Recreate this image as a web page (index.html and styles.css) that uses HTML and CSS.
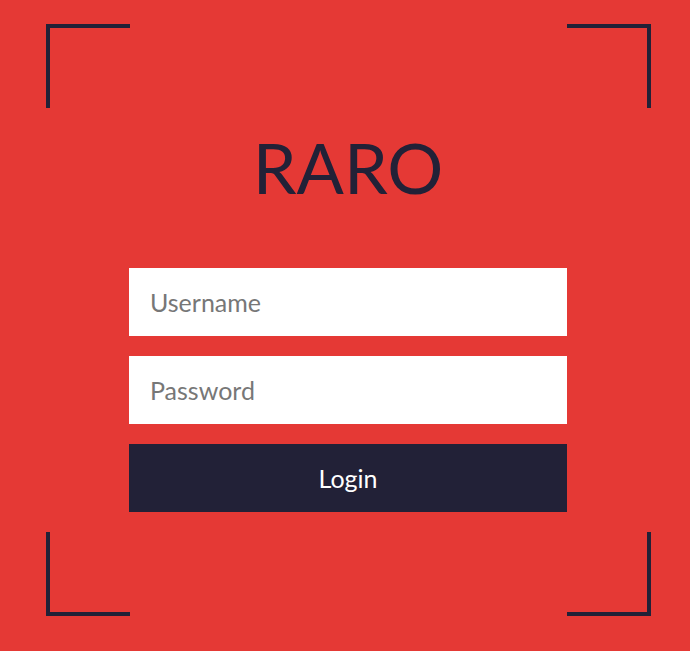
FILE: index.html
```html
<!DOCTYPE html>
<html>
<head>
<meta charset="utf-8">
<link rel="stylesheet" href="styles.css">
</head>
<body>
<div class="frame">
  <div class="corner-row">
    <span class="corner tl"></span>
    <span class="corner tr"></span>
  </div>
  <div class="content">
    <h1 class="title">RARO</h1>
    <form class="form">
      <input class="field" type="text" placeholder="Username">
      <input class="field" type="password" placeholder="Password">
      <button class="login" type="button">Login</button>
    </form>
  </div>
  <div class="corner-row">
    <span class="corner bl"></span>
    <span class="corner br"></span>
  </div>
</div>
</body>
</html>
```

FILE: styles.css
```css
html, body {
  margin: 0;
  padding: 0;
  background: #e53935;
  height: 100%;
}
body {
  font-family: "Lato", "Open Sans", sans-serif;
}
.frame {
  width: 605px;
  height: 592px;
  margin: 24px 0 0 46px;
  display: flex;
  flex-direction: column;
}
.corner-row {
  display: flex;
  justify-content: space-between;
  height: 84px;
}
.corner {
  width: 84px;
  height: 84px;
  box-sizing: border-box;
  border: 0 solid #222137;
}
.tl { border-top-width: 4px; border-left-width: 4px; }
.tr { border-top-width: 4px; border-right-width: 4px; }
.bl { border-bottom-width: 4px; border-left-width: 4px; }
.br { border-bottom-width: 4px; border-right-width: 4px; }
.content {
  flex: 1;
  display: flex;
  flex-direction: column;
  align-items: center;
  padding: 24px 84px 0 83px;
}
.title {
  margin: 0 0 66px;
  font-size: 70px;
  line-height: 70px;
  font-weight: 400;
  color: #222137;
}
.form {
  width: 438px;
  display: flex;
  flex-direction: column;
  gap: 20px;
}
.field {
  height: 68px;
  box-sizing: border-box;
  border: none;
  outline: none;
  background: #fff;
  padding: 0 21px;
  font-family: inherit;
  font-size: 25px;
  color: #333;
}
.field::placeholder {
  color: #777;
}
.login {
  height: 68px;
  border: none;
  background: #222137;
  color: #fff;
  font-family: inherit;
  font-size: 25px;
  cursor: pointer;
}
```
